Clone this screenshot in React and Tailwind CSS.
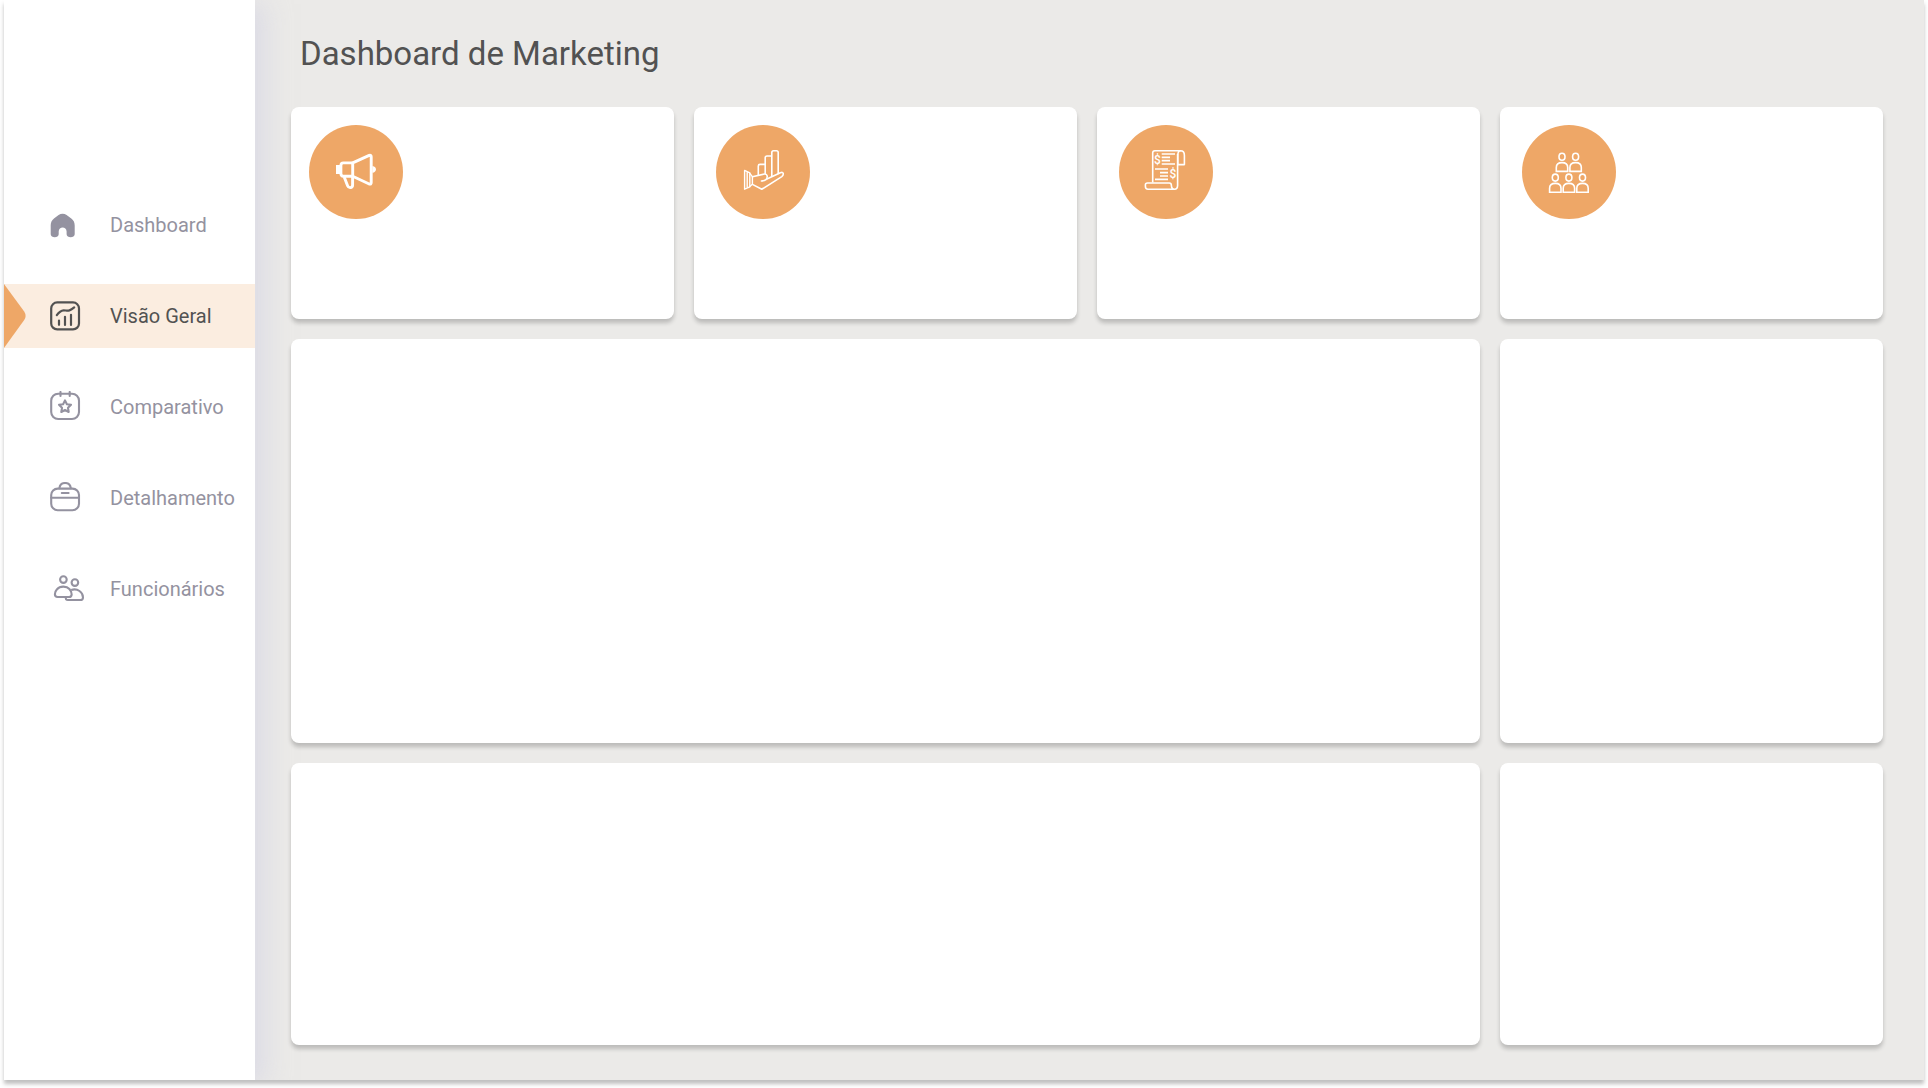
const HomeIcon = () => (
  <svg viewBox="0 0 36 32" className="w-9 h-8 shrink-0" fill="currentColor" aria-hidden="true">
    <path d="M1.7 16.5C1.7 13.2 2.7 11.4 5 9.4L9.6 5.9C12 4.2 15.2 4.2 17.6 5.9L22.3 9.4C24.7 11.4 25.7 13.2 25.7 16.5V25.3C25.7 29.3 17.6 29.3 17.6 25.3V22.5C17.6 17.2 9.7 17.2 9.7 22.5V25.3C9.7 29.3 1.7 29.3 1.7 25.3Z" />
  </svg>
);

const ChartIcon = () => (
  <svg viewBox="0 0 36 32" className="w-9 h-8 shrink-0" fill="none" stroke="currentColor" strokeWidth="2.2" strokeLinecap="round" aria-hidden="true">
    <rect x="2.2" y="2.4" width="27.8" height="27" rx="6" />
    <path d="M7.8 15.2C10.2 11.8 12.2 10.4 14.6 10.3C17 10.3 18.2 11.2 20.4 10.4C22.4 9.7 24 8.4 25.2 7.4" />
    <path d="M10 20.6V24.8M16 16.8V25M22 14.8V25" />
  </svg>
);

const CalendarIcon = () => (
  <svg viewBox="0 0 36 32" className="w-9 h-8 shrink-0" fill="none" stroke="currentColor" strokeWidth="2.1" strokeLinecap="round" strokeLinejoin="round" aria-hidden="true">
    <rect x="2.2" y="2.8" width="27.8" height="25.2" rx="7" />
    <path d="M11.5 1V5M20.7 1V5" />
    <path d="M16 9.4L17.9 13.2L22 13.8L19 16.8L19.7 21L16 19L12.3 21L13 16.8L10 13.8L14.1 13.2Z" />
  </svg>
);

const BagIcon = () => (
  <svg viewBox="0 0 36 32" className="w-9 h-8 shrink-0" fill="none" stroke="currentColor" strokeWidth="2.1" strokeLinecap="round" aria-hidden="true">
    <path d="M10.4 6.2C10.8 3 13 1 16.1 1S21.4 3 21.8 6.2" />
    <rect x="2.2" y="6.6" width="27.8" height="21.6" rx="6.5" />
    <path d="M2.2 15.7H30M12.8 11H19.6" />
  </svg>
);

const PeopleIcon = () => (
  <svg viewBox="0 0 36 32" className="w-9 h-8 shrink-0" fill="none" stroke="currentColor" strokeWidth="2.1" strokeLinejoin="round" aria-hidden="true">
    <circle cx="14.4" cy="6.6" r="3.3" />
    <circle cx="25.9" cy="9.6" r="3.3" />
    <path d="M8.6 24C5 24 5.2 19.2 8 16.2C11 12.8 17.6 12.8 20.4 16C23.6 19.6 23.4 24 20 24Z" />
    <path d="M22.2 17C28.6 14.8 34 19.4 34 24.4C34 26.2 32.8 27 31.2 27H19C17.2 27 16.4 26 17 24.2" />
  </svg>
);

const MegaphoneIcon = () => (
  <svg viewBox="-2 -2 44 44" className="size-11" fill="none" stroke="currentColor" strokeWidth="2.9" strokeLinejoin="round" aria-hidden="true">
    <path d="M0 13H4V22H0Z" fill="currentColor" stroke="none" />
    <path d="M16.7 10.9H7.4Q4.9 10.9 4.9 13.4V21.6Q4.9 24.3 7.4 24.3H16.7" />
    <path d="M16.7 10.9V24.3L33.2 32Q35.2 32.6 35.2 30.6V4.8Q35.2 2.6 33.2 3.4Z" />
    <path d="M36.4 14C41.2 14.4 41.2 20.4 36.4 20.8Z" fill="currentColor" stroke="none" />
    <path d="M8.2 25L11.6 33.8Q12.4 35.8 14.4 35.6Q16.6 35.4 16.6 33V24.3" />
  </svg>
);

const HandChartIcon = () => (
  <svg viewBox="-2 -2 44 44" className="size-11" fill="none" stroke="currentColor" strokeWidth="1.6" strokeLinejoin="round" strokeLinecap="round" aria-hidden="true">
    <path d="M1.6 18.4L6.8 20.8V34.8L1.6 37.2ZM4.2 20V35.6" strokeWidth="1.4" />
    <path d="M6.8 21.4L9.4 24.6V32.2L6.8 34.6" strokeWidth="1.4" />
    <path d="M9.4 24.8L21.4 22Q23.6 21.6 24.2 24Q24.6 28.6 18.4 29" />
    <path d="M24.4 26.8L37.4 20.8Q39.8 19.8 40.2 21.4Q40.6 23.2 38.8 24.6L18.8 37.2L9.4 32.4" />
    <path d="M15.3 23V14Q15.3 12.4 17 12.4H21.6M22.2 21.6V5.8Q22.2 4 24 4H28.4M28.8 24V0.6Q28.8 -1.2 30.6 -1.2H33.4Q35.2 -1.2 35.2 0.6V21.4" />
  </svg>
);

const InvoiceIcon = () => (
  <svg viewBox="-2 -2 44 44" className="size-11" fill="none" stroke="currentColor" strokeWidth="1.6" strokeLinejoin="round" aria-hidden="true">
    <path d="M6.7 30.6V1Q6.7 -1.2 8.8 -1.2H34.6Q38.4 -1.2 38.4 3.4V12.6H31.8V3.4Q31.8 -1 34.6 -1.2" />
    <path d="M31.6 2V33.6Q31.4 37.2 28.6 37.2H2Q-0.6 37.2 -0.6 34.2V32.8Q-0.6 31 1.4 31H23.4Q25.4 31 25.4 33.6Q25.6 37.2 28.6 37.2" />
    <path d="M15.7 2H29M15.7 5.4H24M15.7 8.6H24M15.7 12H29M9 17H22M14 20.6H22M14 24H22M9 27.4H22" />
    <g fill="currentColor" stroke="none" fontFamily="Roboto, sans-serif" fontSize="12" fontWeight="500" textAnchor="middle">
      <text x="11.4" y="11.6">$</text>
      <text x="26.8" y="26.4">$</text>
    </g>
  </svg>
);

const PEOPLE = [
  { x: 13, y: 4.8 },
  { x: 26.6, y: 4.8 },
  { x: 6.3, y: 25.6 },
  { x: 19.9, y: 25.6 },
  { x: 33.5, y: 25.6 },
];

const TeamIcon = () => (
  <svg viewBox="-2 -2 44 44" className="size-11" fill="none" stroke="currentColor" strokeWidth="1.6" aria-hidden="true">
    {PEOPLE.map((p) => (
      <g key={`${p.x}-${p.y}`} transform={`translate(${p.x} ${p.y})`}>
        <ellipse rx="3" ry="3.5" />
        <path d="M-5.7 14.6V10.6Q-5.7 5.8 0 5.8Q5.7 5.8 5.7 10.6V14.6Z" />
      </g>
    ))}
  </svg>
);

const NAV = [
  { label: 'Dashboard', Icon: HomeIcon },
  { label: 'Visão Geral', Icon: ChartIcon, active: true },
  { label: 'Comparativo', Icon: CalendarIcon },
  { label: 'Detalhamento', Icon: BagIcon },
  { label: 'Funcionários', Icon: PeopleIcon },
];

const STATS = [
  { key: 'campaigns', Icon: MegaphoneIcon, pad: 'px-[18px]' },
  { key: 'results', Icon: HandChartIcon, pad: 'px-[22px]' },
  { key: 'costs', Icon: InvoiceIcon, pad: 'px-[22px]' },
  { key: 'team', Icon: TeamIcon, pad: 'px-[22px]' },
];

const CARD = 'bg-white rounded-lg shadow-[0_4px_4px_rgba(0,0,0,0.2)]';

function Sidebar() {
  return (
    <nav className="w-[251px] shrink-0 bg-white pt-[193px] shadow-[10px_4px_24px_rgba(206,206,228,0.5)]">
      <ul className="flex flex-col gap-[27px]">
        {NAV.map(({ label, Icon, active }) => (
          <li key={label}>
            <a
              href="#"
              aria-current={active ? 'page' : undefined}
              className={`relative flex items-center h-16 gap-[25px] pl-[45px] text-xl ${active ? 'bg-[#fbede0] text-[#525252]' : 'text-[#9492a0]'}`}
            >
              {active && (
                <svg viewBox="0 0 22 64" className="absolute left-0 top-0 h-full w-[22px] text-[#eea767]" fill="currentColor" aria-hidden="true">
                  <path d="M0 0L20.2 27.6Q23 32 20.2 36L0 64Z" />
                </svg>
              )}
              <Icon />
              {label}
            </a>
          </li>
        ))}
      </ul>
    </nav>
  );
}

export default function App() {
  return (
    <div className="min-h-screen flex bg-white px-1 pb-2 font-[Roboto,sans-serif]">
      <div className="flex flex-1 overflow-hidden bg-[#ebeae8] shadow-[0_4px_4px_rgba(0,0,0,0.25)]">
        <Sidebar />
        <main className="flex flex-1 flex-col pl-9 pr-[41px] pb-[35px]">
          <h1 className="h-[107px] pl-[9px] pt-8 text-[33px] leading-[44px] text-[#525252]">Dashboard de Marketing</h1>
          <div className="grid flex-1 grid-cols-4 grid-rows-[212px_404fr_282fr] gap-5">
            {STATS.map(({ key, Icon, pad }) => (
              <section key={key} className={`${CARD} ${pad} py-[18px]`}>
                <div className="flex size-[94px] items-center justify-center rounded-full bg-[#eea767] text-white">
                  <Icon />
                </div>
              </section>
            ))}
            <section className={`${CARD} col-span-3`} />
            <section className={CARD} />
            <section className={`${CARD} col-span-3`} />
            <section className={CARD} />
          </div>
        </main>
      </div>
    </div>
  );
}
